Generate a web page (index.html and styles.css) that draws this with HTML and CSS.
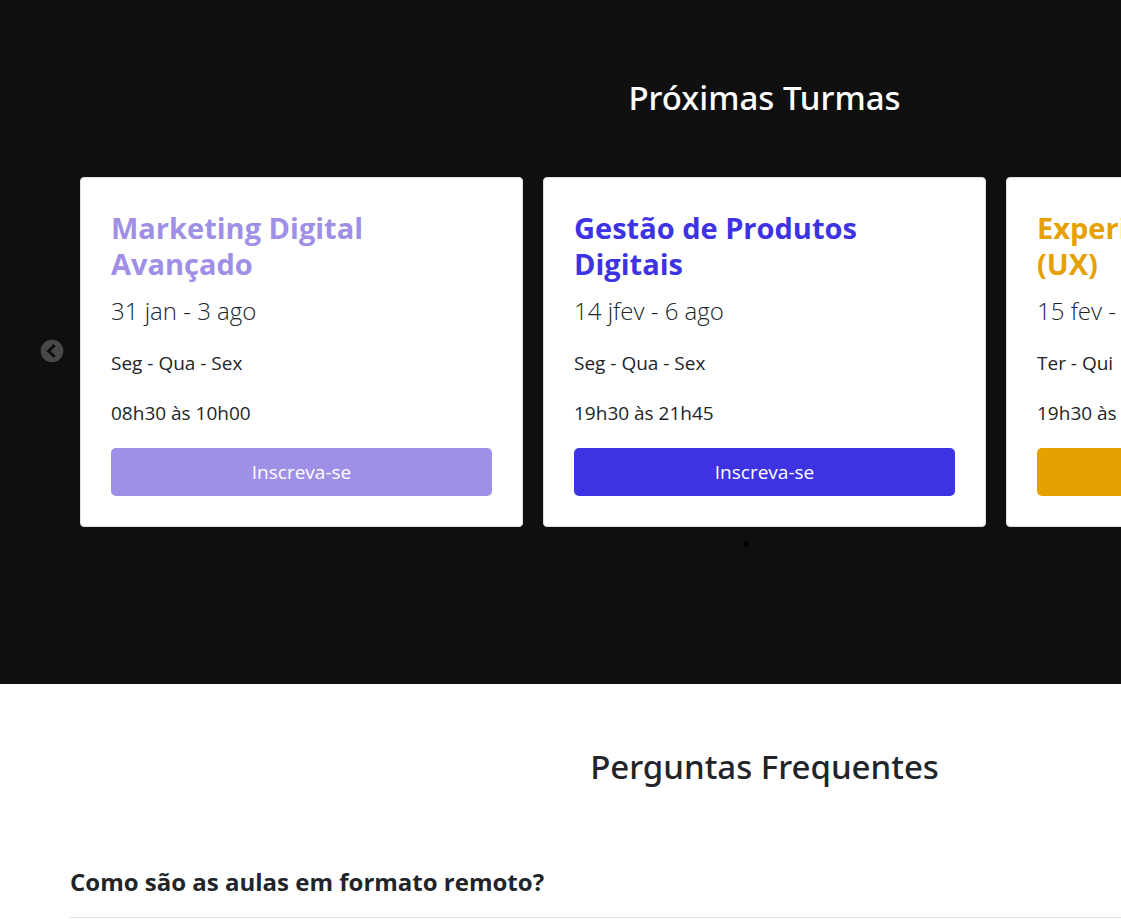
FILE: index.html
```html
<!DOCTYPE html>
<html lang="pt-BR">
<head>
<meta charset="utf-8">
<title>Próximas Turmas</title>
<link rel="stylesheet" href="styles.css">
</head>
<body>
<div class="page">
  <section class="classes">
    <h2 class="section-title">Próximas Turmas</h2>
    <div class="slider">
      <button class="arrow" type="button" aria-label="Anterior">
        <svg class="arrow-icon" viewBox="0 0 24 24" aria-hidden="true">
          <circle cx="12" cy="12" r="11.3" fill="#484848"/>
          <path d="M14.7 6.2 8.6 12l6.1 5.8" fill="none" stroke="#0f0f0f" stroke-width="3"/>
        </svg>
      </button>
      <div class="track">
        <article class="card lilac">
          <h3 class="card-title">Marketing Digital Avançado</h3>
          <p class="date">31 jan - 3 ago</p>
          <p class="info">Seg - Qua - Sex</p>
          <p class="info">08h30 às 10h00</p>
          <a class="enroll" href="#">Inscreva-se</a>
        </article>
        <article class="card blue">
          <h3 class="card-title">Gestão de Produtos Digitais</h3>
          <p class="date">14 jfev - 6 ago</p>
          <p class="info">Seg - Qua - Sex</p>
          <p class="info">19h30 às 21h45</p>
          <a class="enroll" href="#">Inscreva-se</a>
        </article>
        <article class="card amber">
          <h3 class="card-title">Experiência do Usuário (UX)</h3>
          <p class="date">15 fev - 4 ago</p>
          <p class="info">Ter - Qui</p>
          <p class="info">19h30 às 21h45</p>
          <a class="enroll" href="#">Inscreva-se</a>
        </article>
      </div>
    </div>
    <div class="dots">
      <button class="dot active" type="button" aria-label="Página 1"></button>
      <button class="dot" type="button" aria-label="Página 2"></button>
    </div>
  </section>
  <section class="faq">
    <h2 class="section-title">Perguntas Frequentes</h2>
    <h3 class="question">Como são as aulas em formato remoto?</h3>
  </section>
</div>
</body>
</html>
```
FILE: styles.css
```css
* { box-sizing: border-box; }
html { overflow: hidden; }
body {
  margin: 0;
  font-family: "Segoe UI", "Open Sans", "Noto Sans", sans-serif;
  color: #212529;
  background: #fff;
}
h2, h3, p { margin: 0; }
.page { min-width: 1529px; }
.classes {
  padding: 76px 70px 137px;
  background: #0f0f0f;
  color: #fff;
}
.section-title {
  font-family: "Segoe UI", "Noto Sans", sans-serif;
  font-size: 33px;
  line-height: 44px;
  font-weight: 500;
  text-align: center;
}
.slider { position: relative; margin-top: 57px; }
.arrow {
  position: absolute;
  left: -30px;
  top: 0;
  bottom: 3px;
  padding: 0;
  border: 0;
  background: none;
}
.arrow-icon { display: block; width: 24px; height: 24px; }
.track {
  display: grid;
  grid-template-columns: repeat(3, 1fr);
  gap: 20px;
  padding: 0 10px;
}
.card {
  padding: 32px 30px 30px;
  background: #fff;
  border: 1px solid #dfdfdf;
  border-radius: 4px;
  color: #212529;
}
.lilac { --accent: #a08fe6; }
.blue { --accent: #3d33e3; }
.amber { --accent: #e6a000; }
.card-title {
  font-size: 29px;
  line-height: 36px;
  font-weight: 700;
  color: var(--accent);
}
.date {
  margin-top: 10px;
  font-size: 24px;
  line-height: 38px;
  font-weight: 300;
}
.info { margin-top: 20px; font-size: 19px; line-height: 30px; }
.date + .info { margin-top: 18px; }
.enroll {
  display: block;
  margin-top: 20px;
  border-radius: 5px;
  background: var(--accent);
  color: #fff;
  font-size: 19px;
  line-height: 48px;
  text-align: center;
  text-decoration: none;
}
.dots {
  display: flex;
  justify-content: center;
  gap: 32px;
  padding-top: 14px;
}
.dot {
  width: 6px;
  height: 6px;
  padding: 0;
  border: 0;
  border-radius: 50%;
  background: #0b0b0b;
}
.dot.active { background: #000; }
.faq { padding: 61px 70px; }
.question {
  margin-top: 74px;
  padding-bottom: 17px;
  border-bottom: 1px solid #dee2e6;
  font-size: 24px;
  line-height: 37px;
  font-weight: 700;
}
```
